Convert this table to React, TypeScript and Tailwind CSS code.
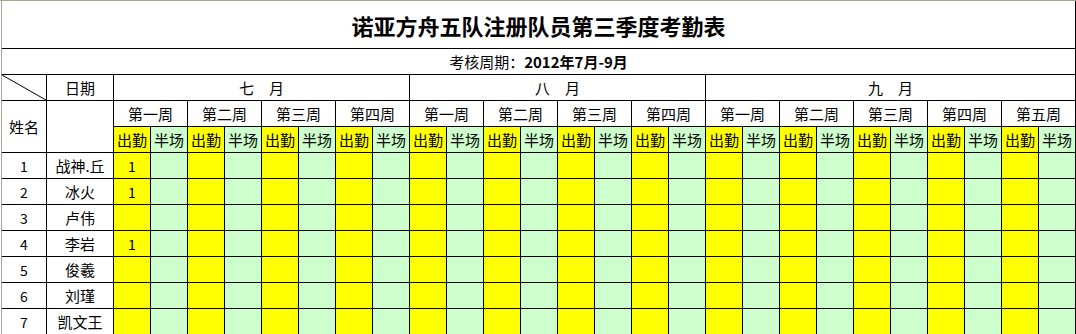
import React from 'react';

const months = [
  { label: '七　月', weeks: ['第一周', '第二周', '第三周', '第四周'] },
  { label: '八　月', weeks: ['第一周', '第二周', '第三周', '第四周'] },
  { label: '九　月', weeks: ['第一周', '第二周', '第三周', '第四周', '第五周'] },
];

const members = [
  { no: 1, name: '战神.丘', marks: { 0: '1' } as Record<number, string> },
  { no: 2, name: '冰火', marks: { 0: '1' } as Record<number, string> },
  { no: 3, name: '卢伟', marks: {} as Record<number, string> },
  { no: 4, name: '李岩', marks: { 0: '1' } as Record<number, string> },
  { no: 5, name: '俊羲', marks: {} as Record<number, string> },
  { no: 6, name: '刘瑾', marks: {} as Record<number, string> },
  { no: 7, name: '凯文王', marks: {} as Record<number, string> },
];

const allWeeks = months.flatMap((m) => m.weeks);

export default function App() {
  return (
    <div className="w-[1076px] bg-white text-black font-['Noto_Sans_CJK_SC',sans-serif]">
      <div className="h-px bg-[#a8a48f]" />
      <div className="flex">
        <div className="w-[2px] shrink-0 border-r border-[#a8a48f]" />
        <div className="grid grid-cols-[44px_66px_repeat(26,36px)] grid-rows-[47px_repeat(11,25px)] gap-px bg-black border-r border-black">
          {/* title */}
          <div className="col-span-28 bg-white flex items-center justify-center text-[22px] font-bold leading-none">
            诺亚方舟五队注册队员第三季度考勤表
          </div>
          {/* period */}
          <div className="col-span-28 bg-white flex items-center justify-center text-[15px] leading-none">
            <span>考核周期：</span>
            <span className="font-bold">2012年7月-9月</span>
          </div>

          {/* header row 1 */}
          <div className="relative bg-white">
            <svg className="absolute inset-0 w-full h-full" viewBox="0 0 44 25" preserveAspectRatio="none">
              <line x1="0" y1="0" x2="44" y2="25" stroke="black" strokeWidth="1" />
            </svg>
          </div>
          <div className="bg-white flex items-center justify-center text-[15px] leading-none">日期</div>
          {months.map((m) => (
            <div
              key={m.label + m.weeks.length}
              className={`bg-white flex items-center justify-center text-[15px] leading-none ${
                m.weeks.length === 5 ? 'col-span-10' : 'col-span-8'
              }`}
            >
              {m.label}
            </div>
          ))}

          {/* header row 2 */}
          <div className="row-span-2 bg-white flex items-center justify-center text-[15px] leading-none">姓名</div>
          <div className="row-span-2 bg-white" />
          {allWeeks.map((w, i) => (
            <div key={i} className="col-span-2 bg-white flex items-center justify-center text-[15px] leading-none">
              {w}
            </div>
          ))}

          {/* header row 3 */}
          {allWeeks.map((_, i) => (
            <React.Fragment key={i}>
              <div className="bg-[#ffff00] flex items-center justify-center text-[15px] leading-none">出勤</div>
              <div className="bg-[#ccffcc] flex items-center justify-center text-[15px] leading-none">半场</div>
            </React.Fragment>
          ))}

          {/* members */}
          {members.map((p) => (
            <React.Fragment key={p.no}>
              <div className="bg-white flex items-center justify-center text-[14px] leading-none">{p.no}</div>
              <div className="bg-white flex items-center justify-center text-[15px] leading-none">{p.name}</div>
              {allWeeks.map((_, i) => (
                <React.Fragment key={i}>
                  <div className="bg-[#ffff00] flex items-center justify-center text-[14px] leading-none">
                    {p.marks[i] ?? ''}
                  </div>
                  <div className="bg-[#ccffcc]" />
                </React.Fragment>
              ))}
            </React.Fragment>
          ))}
        </div>
      </div>
    </div>
  );
}
